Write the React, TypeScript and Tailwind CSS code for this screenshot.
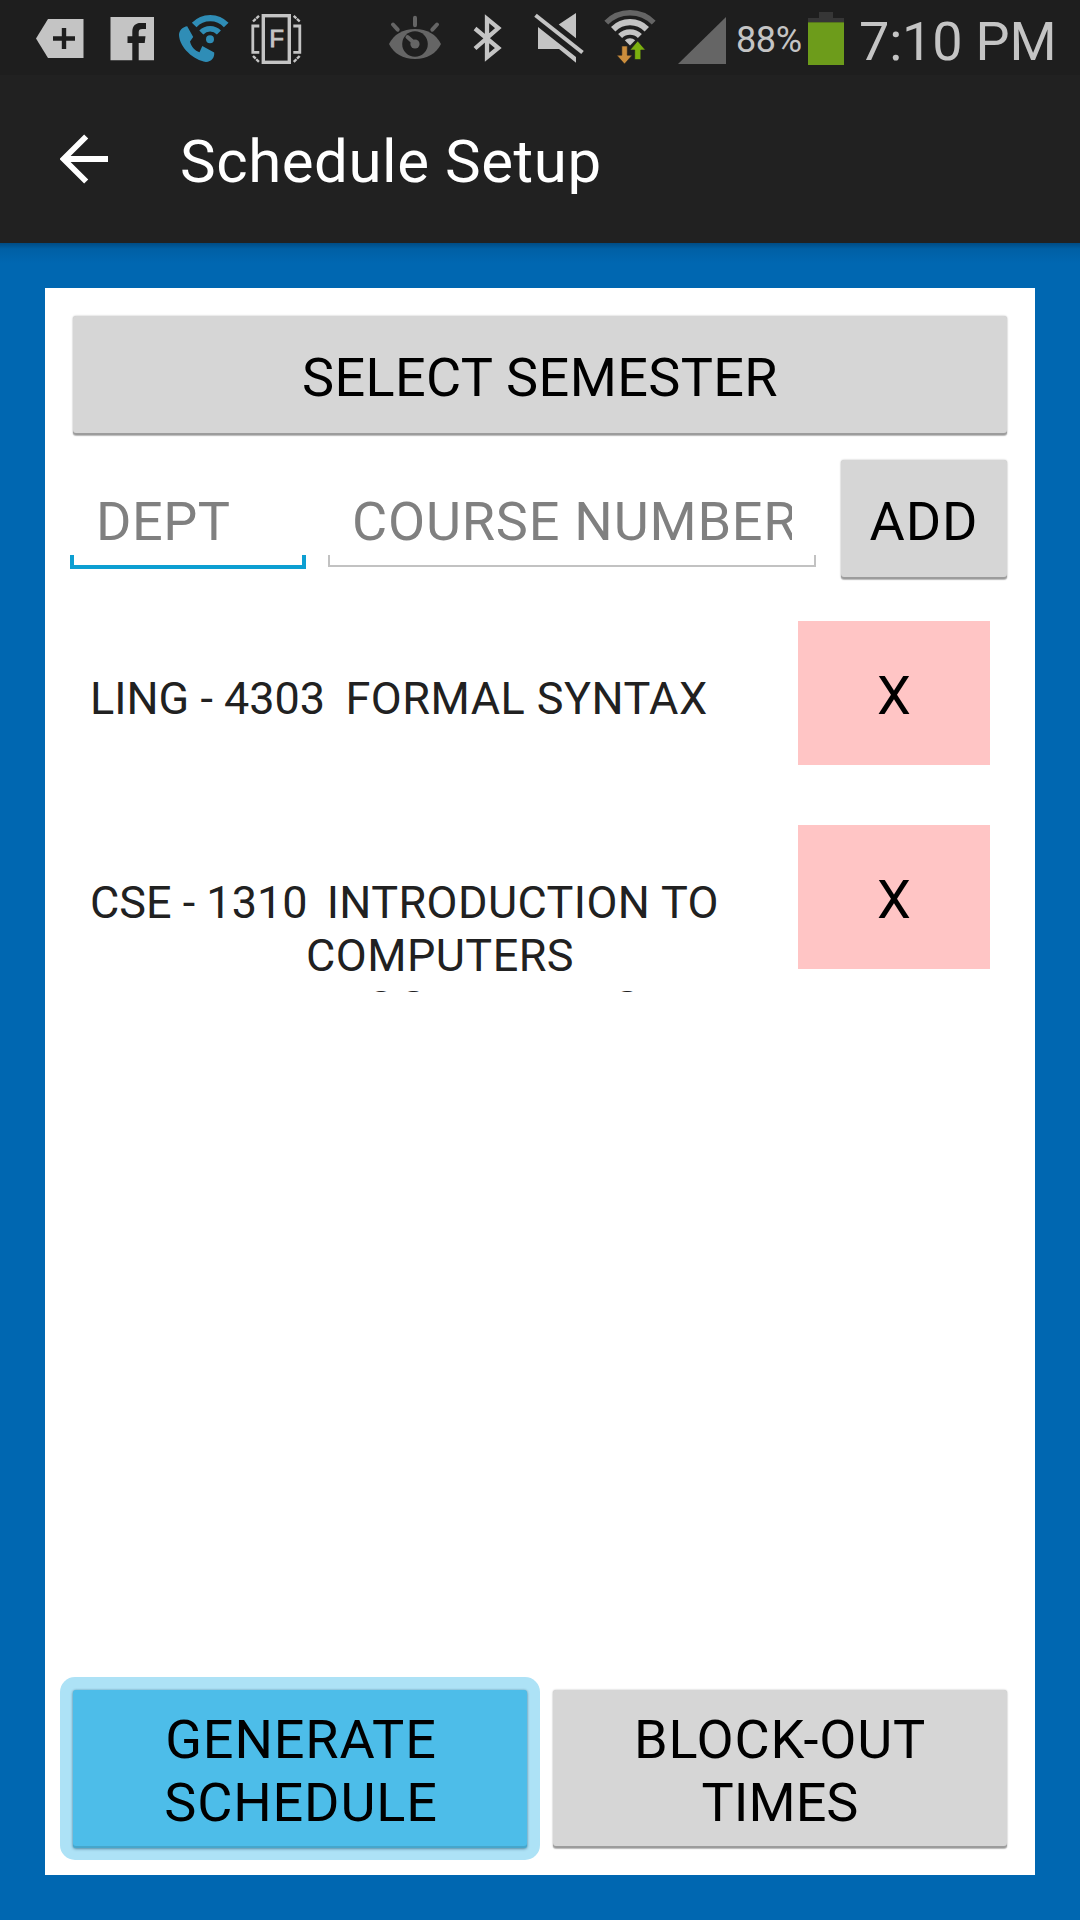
import React from "react";

const LIGHT = "#c4c4c4";
const DIM = "#656565";

function StatusIcon({ x, w, children }: { x: number; w: number; children: React.ReactNode }) {
  return (
    <svg className="block shrink-0" width={w} height={75} viewBox={`${x} 0 ${w} 75`} fill="none">
      {children}
    </svg>
  );
}

function StatusBar() {
  return (
    <div className="flex h-[75px] w-full bg-[#1e1e1e] text-[#c4c4c4]">
      <StatusIcon x={0} w={97}>
        <path d="M36 38.5 48 19H83.5V58H48Z" fill={LIGHT} />
        <path d="M53 38.5H75M64 28V49" stroke="#1e1e1e" strokeWidth="4.4" />
      </StatusIcon>
      <StatusIcon x={97} w={69}>
        <path d="M110.5 17H154V60.3H110.5Z" fill={LIGHT} />
        <path d="M132.3 61V43H127.5V36.3H132.3V32C132.3 25.5 136 23 140.5 23H146V29H142.5C139.5 29 138.7 30 138.7 32.5V36.3H145.5L144.7 43H138.7V61Z" fill="#1e1e1e" />
      </StatusIcon>
      <StatusIcon x={166} w={74}>
        <path d="M194.2 25A22 22 0 0 1 226.2 25" stroke="#2f8db6" strokeWidth="6.4" />
        <path d="M201.3 32.5A12.2 12.2 0 0 1 218.9 32.5" stroke="#2f8db6" strokeWidth="5.6" />
        <circle cx="210" cy="39.3" r="4" fill="#2f8db6" />
        <path d="M179 35C179 30.5 183 26.8 187.2 26.3L193.2 37 190 41.5C191 46.5 195 51 199.5 52.2L202.3 46 214.2 52.5C214.8 57.5 211.5 61.8 206 61.9C194 60.5 179.5 47.5 179 35Z" fill="#2f8db6" />
      </StatusIcon>
      <StatusIcon x={240} w={105}>
        <rect x="263.3" y="15.7" width="26" height="46.6" stroke={LIGHT} strokeWidth="3.4" />
        <path d="M259.3 26H252.8V52.3H259.3M293.3 26H299.8V52.3H293.3" stroke={LIGHT} strokeWidth="2.8" />
        <path d="M253 21.5 259 15.8M299.7 21.5 293.7 15.8M253 56 259 62M299.7 56 293.7 62" stroke={LIGHT} strokeWidth="2.4" strokeDasharray="3.8 .8" />
        <text x="269.4" y="46.7" fontSize="23.5" fontFamily="Liberation Sans" fill={LIGHT} stroke={LIGHT} strokeWidth="1">F</text>
      </StatusIcon>
      <StatusIcon x={345} w={112}>
        <path d="M389 44C393.5 34.5 403 29 415 29S436.5 34.5 441 44C436.5 53.5 427 59 415 59S393.5 53.5 389 44Z" fill={DIM} />
        <circle cx="415" cy="44" r="12.8" fill="#1e1e1e" />
        <circle cx="415" cy="44" r="4.6" fill={DIM} />
        <path d="M407.5 37 412 41M415 17.7V25.3M393 24.5 397.7 29.7M437 24.5 432.3 29.7" stroke={DIM} strokeWidth="4" strokeLinecap="round" />
      </StatusIcon>
      <StatusIcon x={457} w={61}>
        <path d="M475 28.5 498.3 48 487 57.3V18.7L498.3 28 475 48.5" stroke={LIGHT} strokeWidth="4.3" strokeMiterlimit="10" />
      </StatusIcon>
      <StatusIcon x={518} w={76}>
        <path d="M576 13V38.3L558.7 24.5ZM538 27 576 57V62.7L559 49H538Z" fill={LIGHT} />
        <path d="M535.5 15.3 582.5 52.5" stroke={LIGHT} strokeWidth="4" />
      </StatusIcon>
      <StatusIcon x={594} w={73}>
        <path d="M606.3 22.6A33.3 33.3 0 0 1 653.7 22.6" stroke={DIM} strokeWidth="5.4" />
        <path d="M613.2 29.2A23.7 23.7 0 0 1 646.8 29.2" stroke={LIGHT} strokeWidth="6.2" />
        <path d="M620.1 36.1A14 14 0 0 1 639.9 36.1" stroke={LIGHT} strokeWidth="5.6" />
        <path d="M624.8 40.2A8 8 0 0 1 635.2 40.2L630 45.5Z" fill={LIGHT} />
        <path d="M621.8 46H627.3V55.2H632.2L624.5 64 616.8 55.2H621.8Z" fill="#cb8d3c" stroke="#1e1e1e" strokeWidth=".6" />
        <path d="M637.7 41 645.4 50H640.8V59.5H634.7V50H630Z" fill="#7cb00f" stroke="#1e1e1e" strokeWidth=".6" />
      </StatusIcon>
      <StatusIcon x={667} w={69}>
        <path d="M678 64H726V17Z" fill={DIM} />
      </StatusIcon>
      <span className="w-[72px] pt-[2px] text-[36px] leading-[77px] tracking-[-0.4px] whitespace-nowrap">88%</span>
      <div className="flex h-full w-[36px] flex-col items-center pt-[12px]">
        <div className="h-[6px] w-[14px] bg-[#363636]" />
        <div className="h-[4px] w-full bg-[#363636]" />
        <div className="h-[43px] w-full border-t border-[#56761c] bg-[#6d9c1b]" />
      </div>
      <span className="ml-[15px] text-[54px] leading-[83px] tracking-[-0.2px] whitespace-nowrap">7:10 PM</span>
    </div>
  );
}

const RAISED =
  "rounded-[3px] bg-[#d6d6d6] shadow-[0_0_2px_rgba(0,0,0,0.3),0_1px_1px_rgba(0,0,0,0.2),inset_0_-2px_0_#9c9c9c]";

function Field({ label, focused, className }: { label: string; focused?: boolean; className: string }) {
  return (
    <div className={`relative flex h-[120px] items-center overflow-hidden text-[54px] text-[#808080] ${className}`}>
      <span className="overflow-hidden pt-[5px] leading-[64px] whitespace-nowrap">{label}</span>
      <div
        className={
          focused
            ? "absolute inset-x-0 bottom-[10px] h-[14px] border-x-4 border-b-4 border-[#0d9fd2]"
            : "absolute inset-x-0 bottom-[12px] h-[12px] border-x-2 border-b-2 border-[#c2c2c2]"
        }
      />
    </div>
  );
}

function CourseRow({ children }: { children: React.ReactNode }) {
  return (
    <div className="flex h-[204px] items-start">
      <div className="h-[167px] w-[752px] overflow-hidden pt-[51px] pl-[45px] text-[45px] leading-[53px] whitespace-pre text-[#212121]">
        {children}
      </div>
      <button className="ml-[1px] h-[144px] w-[192px] bg-[#ffc5c5] pt-[5px] text-[54px] leading-[64px] text-black">X</button>
    </div>
  );
}

export default function App() {
  return (
    <div className="flex h-[1920px] w-[1080px] flex-col overflow-hidden bg-[#0067b1] font-[Roboto,sans-serif]">
      <StatusBar />
      <header className="flex h-[168px] shrink-0 items-center bg-[#212121] text-white">
        <svg className="ml-[60px] block" width="48" height="60" viewBox="60 129 48 60" fill="none">
          <path d="M86.2 136.5 63.5 159 86.2 181.5M64 159H108.5" stroke="white" strokeWidth="5.8" />
        </svg>
        <h1 className="ml-[72px] pt-[5px] text-[60px] leading-[70px] tracking-[0.55px]">Schedule Setup</h1>
      </header>
      <div className="h-[20px] shrink-0 bg-linear-to-b from-[#004c84] via-[#0060a5] via-30% to-[#0067b1]" />

      <main className="mx-[45px] mt-[25px] flex h-[1587px] shrink-0 flex-col bg-white pt-[28px] text-black">
        <button className={`mx-[28px] h-[119px] shrink-0 pt-[4px] text-[54px] leading-[64px] tracking-[0.38px] ${RAISED}`}>
          SELECT SEMESTER
        </button>

        <div className="mt-[24px] flex">
          <Field label="DEPT" focused className="ml-[25px] w-[236px] pl-[26px] tracking-[0.5px]" />
          <Field label="COURSE NUMBER" className="ml-[22px] w-[488px] pr-[24px] pl-[24px] tracking-[0.8px]" />
          <button className={`mt-[1px] ml-[25px] h-[119px] w-[166px] pt-[4px] text-[54px] leading-[64px] tracking-[1px] ${RAISED}`}>
            ADD
          </button>
        </div>

        <div className="mt-[42px] grow">
          <CourseRow>
            <p>
              LING - 4303 <span className="-ml-[2.5px] tracking-[0.48px]"> FORMAL SYNTAX</span>
            </p>
          </CourseRow>
          <CourseRow>
            <p>
              CSE - 1310 <span className="-ml-[3.5px] tracking-[0.4px]"> INTRODUCTION TO</span>
            </p>
            <p className="pl-[216px] tracking-[0.45px]">COMPUTERS</p>
            <p className="pl-[115px] tracking-[0.3px]">
              AND PR<span className="text-[46.4px] leading-none">OG</span>RAMMIN
              <span className="text-[46.4px] leading-none">G</span>
            </p>
          </CourseRow>
        </div>

        <div className="flex pb-[15px] pl-[15px]">
          <div className="h-[183px] w-[480px] rounded-[15px] bg-[#ade2f6] px-[13px] pt-[13px]">
            <button className="h-[158px] w-full rounded-[3px] bg-[#4dbde9] pt-[4px] pl-[2px] text-[54px] leading-[63px] tracking-[0.85px] shadow-[0_0_2px_rgba(0,60,90,0.3),0_1px_3px_rgba(0,60,90,0.45),inset_0_-2px_0_#46a6cb]">
              GENERATE
              <br />
              SCHEDULE
            </button>
          </div>
          <button className={`mt-[13px] ml-[13px] h-[158px] w-[454px] pt-[4px] text-[54px] leading-[63px] ${RAISED}`}>
            <span className="tracking-[0.8px]">BLOCK-OUT</span>
            <br />
            TIMES
          </button>
        </div>
      </main>
    </div>
  );
}
